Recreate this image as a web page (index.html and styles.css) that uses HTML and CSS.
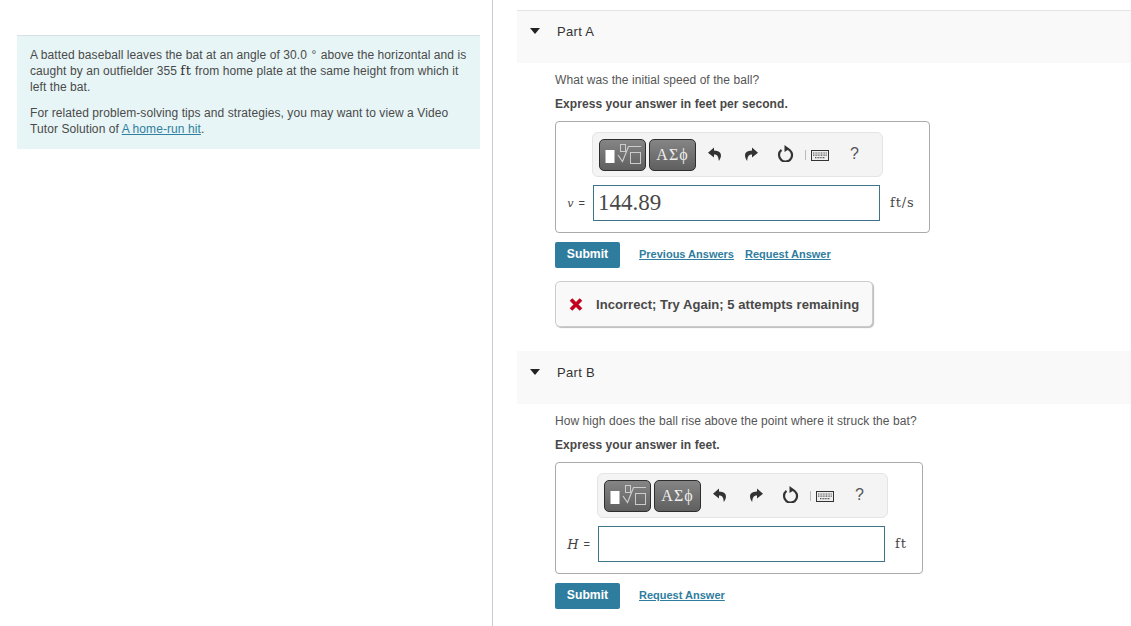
FILE: index.html
```html
<!DOCTYPE html>
<html lang="en">
<head>
    <meta charset="UTF-8">
    <title>A home-run hit</title>
    <link rel="stylesheet" href="styles.css">
</head>
<body>
    <svg class="sprites" width="0" height="0">
        <symbol id="i-undo" viewBox="0 0 14 14"><path d="M6 0.5 L0 5.8 L6 10.5 V7.6 C9 7.6 10.4 9 10.8 14 C14 10 14.6 3.8 6 3.6 Z" fill="#333"/></symbol>
        <symbol id="i-redo" viewBox="0 0 14 14"><path d="M8 0.5 L14 5.8 L8 10.5 V7.6 C5 7.6 3.6 9 3.2 14 C0 10 -0.6 3.8 8 3.6 Z" fill="#333"/></symbol>
        <symbol id="i-reset" viewBox="0 0 17 17"><path d="M10 3.7 A6.5 6.5 0 1 1 4.5 4.9" fill="none" stroke="#333" stroke-width="2.2"/><path d="M7.5 0 L12.5 3.7 L7.5 7 Z" fill="#333"/></symbol>
        <symbol id="i-keys" viewBox="0 0 18 11"><rect x="0.5" y="0.5" width="17" height="10" fill="#eee" stroke="#333"/><path d="M2 3 H16 M2 5.2 H16 M4 7.6 H14" stroke="#555" stroke-width="1.2" stroke-dasharray="1 .6"/></symbol>
        <symbol id="i-templates" viewBox="0 0 40 24"><rect x="2.5" y="7" width="9" height="13" fill="#fff"/><rect x="17.5" y="1.5" width="5" height="7" fill="none" stroke="#ccc"/><path d="M15 12 L19.5 18.5 L25.5 3.5 H38" fill="none" stroke="#ccc" stroke-width="1.2"/><rect x="27.5" y="9.5" width="10" height="11" fill="none" stroke="#ccc"/></symbol>
        <symbol id="i-cross" viewBox="0 0 14 13"><path d="M2 1.5 L12 11.5 M12 1.5 L2 11.5" stroke="#c4001f" stroke-width="3.6"/></symbol>
    </svg>

    <div class="page">
        <div class="left-col">
            <div class="intro">
                <p>A batted baseball leaves the bat at an angle of 30.0 <span class="deg">&deg;</span> above the horizontal and is caught by an outfielder 355 <span class="math-unit">ft</span> from home plate at the same height from which it left the bat.</p>
                <p>For related problem-solving tips and strategies, you may want to view a Video Tutor Solution of <a href="#">A home-run hit</a>.</p>
            </div>
        </div>

        <div class="right-col">
            <section class="part part-a">
                <div class="part-header"><span class="caret"></span><span>Part A</span></div>
                <div class="part-body">
                    <p class="question">What was the initial speed of the ball?</p>
                    <p class="express">Express your answer in feet per second.</p>
                    <div class="answer-box box-a">
                        <div class="toolbar">
                            <button class="tool-btn"><svg width="40" height="24"><use href="#i-templates"/></svg></button>
                            <button class="tool-btn greek">&Alpha;&Sigma;&#981;</button>
                            <span class="tool-icons">
                                <svg class="ic-undo" width="14" height="14"><use href="#i-undo"/></svg>
                                <svg class="ic-redo" width="14" height="14"><use href="#i-redo"/></svg>
                                <svg class="ic-reset" width="17" height="17"><use href="#i-reset"/></svg>
                                <span class="tool-sep"></span>
                                <svg class="ic-keys" width="18" height="11"><use href="#i-keys"/></svg>
                                <span class="ic-help">?</span>
                            </span>
                        </div>
                        <div class="answer-row">
                            <span class="var-label"><i>v</i><span>=</span></span>
                            <div class="answer-input">144.89</div>
                            <span class="unit">ft/s</span>
                        </div>
                    </div>
                    <div class="actions">
                        <button class="submit">Submit</button>
                        <a class="action-link" href="#">Previous Answers</a>
                        <a class="action-link" href="#">Request Answer</a>
                    </div>
                    <div class="feedback"><svg class="cross" width="14" height="13"><use href="#i-cross"/></svg><span>Incorrect; Try Again; 5 attempts remaining</span></div>
                </div>
            </section>

            <section class="part part-b">
                <div class="part-header"><span class="caret"></span><span>Part B</span></div>
                <div class="part-body">
                    <p class="question">How high does the ball rise above the point where it struck the bat?</p>
                    <p class="express">Express your answer in feet.</p>
                    <div class="answer-box box-b">
                        <div class="toolbar">
                            <button class="tool-btn"><svg width="40" height="24"><use href="#i-templates"/></svg></button>
                            <button class="tool-btn greek">&Alpha;&Sigma;&#981;</button>
                            <span class="tool-icons">
                                <svg class="ic-undo" width="14" height="14"><use href="#i-undo"/></svg>
                                <svg class="ic-redo" width="14" height="14"><use href="#i-redo"/></svg>
                                <svg class="ic-reset" width="17" height="17"><use href="#i-reset"/></svg>
                                <span class="tool-sep"></span>
                                <svg class="ic-keys" width="18" height="11"><use href="#i-keys"/></svg>
                                <span class="ic-help">?</span>
                            </span>
                        </div>
                        <div class="answer-row">
                            <span class="var-label var-h"><i>H</i><span>=</span></span>
                            <div class="answer-input"></div>
                            <span class="unit">ft</span>
                        </div>
                    </div>
                    <div class="actions">
                        <button class="submit">Submit</button>
                        <a class="action-link" href="#">Request Answer</a>
                    </div>
                </div>
            </section>
        </div>
    </div>
</body>
</html>
```

FILE: styles.css
```css
html, body {
    height: 100%;
}

body {
    margin: 0;
    font-family: 'Liberation Sans', Arial, sans-serif;
    font-size: 12px;
    color: #333;
    background-color: #fff;
    overflow: hidden;
}

.sprites {
    display: block;
    height: 0;
}

.page {
    display: flex;
    height: 626px;
}

.left-col {
    box-sizing: border-box;
    width: 493px;
    flex-shrink: 0;
    padding: 35px 12px 0 17px;
    border-right: 1px solid #c6cad6;
}

.intro {
    box-sizing: border-box;
    height: 114px;
    padding: 12px 6px 0 13px;
    background-color: #e7f5f6;
    border-top: 1px solid #d7e0e3;
    line-height: 15.4px;
    letter-spacing: 0.08px;
    color: #4a4a4a;
}

.intro p {
    margin: 0 0 11px 0;
}

.intro a {
    color: #2f7f9f;
}

.deg {
    margin: 0 1px;
}

.math-unit {
    font-family: 'DejaVu Serif', serif;
    font-size: 13px;
    letter-spacing: 0.6px;
    color: #333;
}

.right-col {
    flex: 1;
    min-width: 0;
    padding: 10px 0 0 24px;
}

.part-header {
    box-sizing: border-box;
    display: flex;
    align-items: flex-start;
    height: 53px;
    padding: 13px 0 0 13px;
    background-color: #f9f9f9;
    font-size: 13px;
    line-height: 16px;
    letter-spacing: 0.3px;
    color: #333;
}

.part-a .part-header {
    border-top: 1px solid #e2e4e8;
}

.part-b {
    margin-top: 24px;
}

.part-b .part-header {
    padding-top: 14px;
}

.caret {
    width: 0;
    height: 0;
    margin: 4px 17px 0 0;
    border-left: 5px solid transparent;
    border-right: 5px solid transparent;
    border-top: 6px solid #222;
}

.part-body {
    padding: 9px 0 0 38px;
}

.question {
    margin: 0;
    line-height: 16px;
    letter-spacing: 0.07px;
    color: #555;
}

.express {
    margin: 8px 0 9px 0;
    line-height: 16px;
    font-weight: bold;
    font-size: 12px;
    letter-spacing: 0.07px;
    color: #484848;
}

.answer-box {
    box-sizing: border-box;
    height: 112px;
    padding: 10px 0 0 0;
    border: 1px solid #aaa;
    border-radius: 4px;
    background: #fff;
}

.box-a {
    width: 375px;
}

.box-b {
    width: 368px;
}

.toolbar {
    box-sizing: border-box;
    display: flex;
    align-items: center;
    gap: 3px;
    width: 291px;
    height: 45px;
    padding: 0 0 0 6px;
    background-color: #f4f4f4;
    border: 1px solid #e4e4e4;
    border-radius: 6px;
}

.box-a .toolbar {
    margin-left: 36px;
}

.box-b .toolbar {
    margin-left: 41px;
}

.tool-btn {
    display: flex;
    align-items: center;
    justify-content: center;
    width: 47px;
    height: 32px;
    padding: 0;
    background: linear-gradient(#858585 0%, #5f5f5f 100%);
    border: 1px solid #2e2e2e;
    border-radius: 5px;
    color: #eee;
}

.greek {
    font-family: 'Liberation Serif', serif;
    font-size: 16px;
    letter-spacing: 1px;
}

.tool-icons {
    display: flex;
    align-items: center;
    box-sizing: border-box;
    height: 100%;
    flex: 1;
    padding-bottom: 2px;
}

.ic-undo {
    margin-left: 9px;
}

.ic-redo {
    margin-left: 22px;
}

.ic-reset {
    margin-left: 19px;
}

.tool-sep {
    width: 1px;
    height: 10px;
    margin: 3px 0 0 11px;
    background-color: #bbb;
}

.ic-keys {
    margin: 4px 0 0 5px;
}

.ic-help {
    margin-left: 21px;
    font-size: 16px;
    color: #555;
}

.answer-row {
    display: flex;
    align-items: center;
    margin-top: 8px;
}

.var-label {
    box-sizing: border-box;
    display: flex;
    align-items: center;
    justify-content: flex-end;
    gap: 5px;
    width: 37px;
    padding-right: 8px;
    font-size: 11px;
    color: #444;
}

.var-label i {
    font-family: 'DejaVu Serif', serif;
    font-size: 11px;
}

.var-h {
    width: 42px;
    padding-right: 8px;
}

.var-h i {
    font-size: 13px;
}

.answer-input {
    box-sizing: border-box;
    width: 287px;
    height: 36px;
    padding-left: 4px;
    border: 1px solid #3e7487;
    background: #fff;
    font-family: 'Liberation Serif', serif;
    font-size: 23px;
    line-height: 33px;
    color: #484848;
}

.unit {
    margin-left: 10px;
    padding-bottom: 2px;
    font-family: 'DejaVu Serif', serif;
    font-size: 13px;
    letter-spacing: 0.9px;
    color: #444;
}

.actions {
    display: flex;
    align-items: center;
    margin-top: 9px;
}

.submit {
    width: 65px;
    height: 26px;
    margin-right: 19px;
    padding: 0 0 2px 0;
    background-color: #2f7d9e;
    border: none;
    border-radius: 2px;
    font-family: 'Liberation Sans', Arial, sans-serif;
    font-size: 12.2px;
    font-weight: bold;
    color: #fff;
}

.action-link {
    margin: 0 11px 2px 0;
    font-size: 11px;
    font-weight: bold;
    color: #2f7d9e;
}

.feedback {
    box-sizing: border-box;
    display: flex;
    align-items: center;
    width: 318px;
    height: 46px;
    margin-top: 13px;
    padding-left: 13px;
    background-color: #f9f9f9;
    border: 1px solid #ccc;
    border-radius: 5px;
    box-shadow: 1px 1px 1px #bbb;
    font-size: 13px;
    font-weight: bold;
    letter-spacing: 0.05px;
    color: #484848;
}

.cross {
    margin-right: 13px;
}
```
